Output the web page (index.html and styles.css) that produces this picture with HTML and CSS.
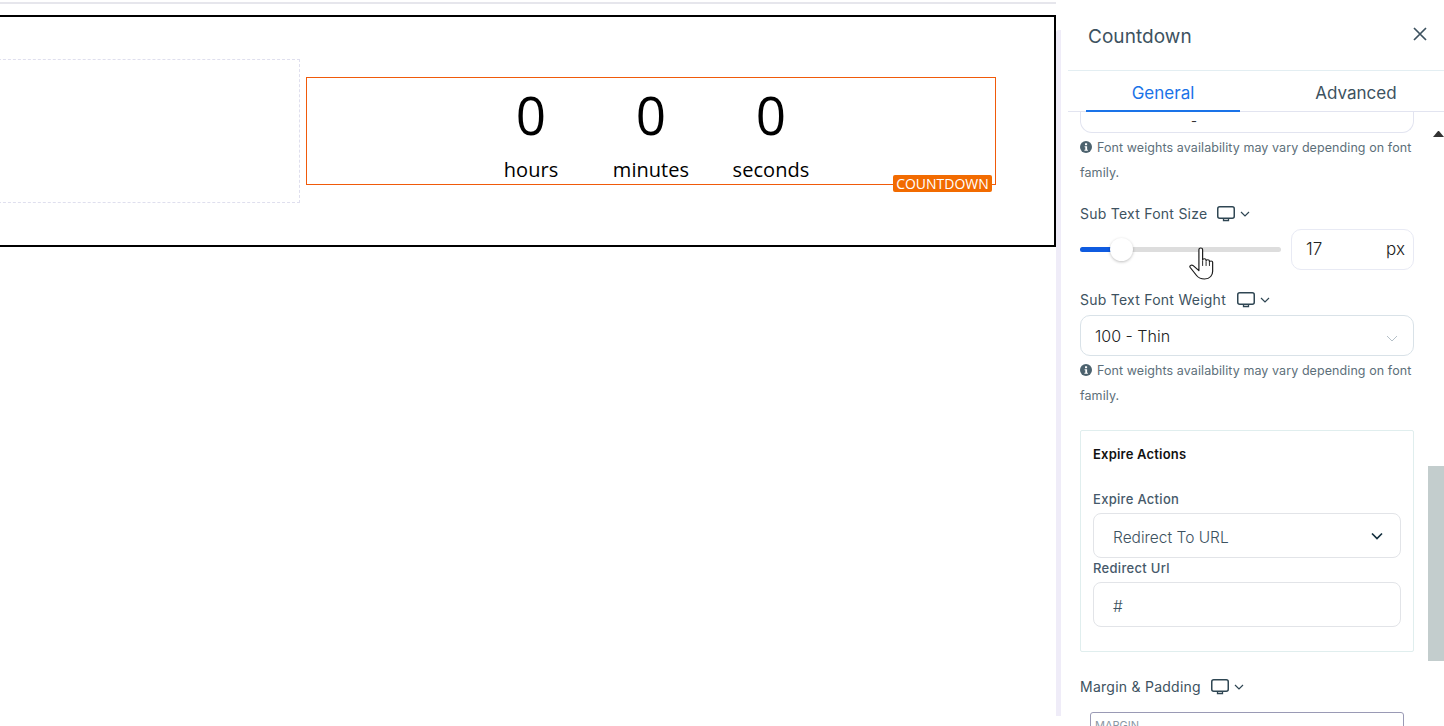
FILE: index.html
```html
<!DOCTYPE html>
<html lang="en">
<head>
<meta charset="utf-8">
<title>Countdown</title>
<link rel="stylesheet" href="styles.css">
</head>
<body>
<svg class="defs" width="0" height="0">
  <symbol id="monitor" viewBox="0 0 18 16">
    <rect x=".75" y=".75" width="16.500" height="11.500" rx="2" fill="none" stroke="currentColor" stroke-width="1.5"/>
    <path d="M6.5 12.5v2h5v-2" fill="none" stroke="currentColor" stroke-width="1.3"/>
  </symbol>
  <symbol id="chev" viewBox="0 0 10 6">
    <path d="M1 1l4 4 4-4" fill="none" stroke="currentColor" stroke-width="1.2"/>
  </symbol>
  <symbol id="info" viewBox="0 0 12 12">
    <circle cx="6" cy="6" r="6" fill="currentColor"/>
    <rect x="5" y="2.3" width="2.1" height="1.9" fill="#fff"/>
    <path d="M4.6 5.2h2.5v3.6h.8v1H4.4v-1h.9V6.2h-.7z" fill="#fff"/>
  </symbol>
</svg>

<div class="page">
  <main class="canvas">
    <div class="topline"></div>
    <div class="frame">
      <div class="empty-col"></div>
      <div class="countdown">
        <div class="unit"><div class="num">0</div><div class="sub">hours</div></div>
        <div class="unit"><div class="num">0</div><div class="sub">minutes</div></div>
        <div class="unit"><div class="num">0</div><div class="sub">seconds</div></div>
        <span class="badge">COUNTDOWN</span>
      </div>
    </div>
  </main>

  <div class="gutter"><div class="gutter-bar"></div></div>

  <aside class="panel">
    <div class="panel-head">
      <span class="panel-title">Countdown</span>
      <svg class="close" width="16" height="16" viewBox="0 0 16 16"><path d="M2 2l12 12M14 2L2 14" fill="none" stroke="currentColor" stroke-width="1.7"/></svg>
    </div>
    <div class="tabs">
      <div class="tab active">General</div>
      <div class="tab">Advanced</div>
    </div>
    <div class="panel-body">
      <div class="stub"><span>-</span></div>
      <p class="note"><svg class="ico-info"><use href="#info"/></svg>Font weights availability may vary depending on font family.</p>

      <div class="label label-size">Sub Text Font Size <svg class="ico-mon"><use href="#monitor"/></svg><svg class="ico-chev"><use href="#chev"/></svg></div>
      <div class="slider-row">
        <div class="track"><div class="fill"></div><div class="thumb"></div></div>
        <div class="num-input"><span>17</span><span>px</span></div>
      </div>

      <div class="label label-weight">Sub Text Font Weight <svg class="ico-mon"><use href="#monitor"/></svg><svg class="ico-chev"><use href="#chev"/></svg></div>
      <div class="select-box"><span>100 - Thin</span><svg class="sel-chev" width="12" height="7" viewBox="0 0 12 7"><path d="M1 1l5 5 5-5" fill="none" stroke="currentColor" stroke-width="1"/></svg></div>
      <p class="note"><svg class="ico-info"><use href="#info"/></svg>Font weights availability may vary depending on font family.</p>

      <section class="card">
        <h4 class="card-title">Expire Actions</h4>
        <div class="field-label first">Expire Action</div>
        <div class="field"><span>Redirect To URL</span><svg class="field-chev" width="12" height="8" viewBox="0 0 12 8"><path d="M1 1.5l5 5 5-5" fill="none" stroke="currentColor" stroke-width="1.7"/></svg></div>
        <div class="field-label">Redirect Url</div>
        <div class="field"><span>#</span></div>
      </section>

      <div class="label label-margin">Margin &amp; Padding <svg class="ico-mon"><use href="#monitor"/></svg><svg class="ico-chev"><use href="#chev"/></svg></div>
      <div class="margin-box">MARGIN</div>
    </div>
    <div class="scroll-arrow"></div>
    <div class="scroll-thumb"></div>
    <svg class="cursor" width="26" height="33" viewBox="0.5 0.5 21 30.5" preserveAspectRatio="none">
      <path d="M8.5 3c0-2 3-2 3 0v9.500c0-1.600 2.800-1.600 2.800 0v1c0-1.500 2.700-1.500 2.700 0v1c0-1.400 2.600-1.400 2.600.2v8.300c0 3.500-2 7-6.500 7-3.300 0-5-1-6.500-3.200L1.500 19.500c-1-1.700 1-3 2.400-1.700l4.600 4.500z" fill="#fff" stroke="#1a1a1a" stroke-width=".95" stroke-linejoin="round"/>
      <path d="M11.500 13v5M14.300 14v4M17 15v3" fill="none" stroke="#1a1a1a" stroke-width=".8"/>
    </svg>
  </aside>
</div>
</body>
</html>
```

FILE: styles.css
```css
* { box-sizing: border-box; }
html, body { margin: 0; height: 100%; overflow: hidden; background: #fff; }
.defs { position: absolute; }

.page { display: flex; height: 726px; font-family: Inter, "Liberation Sans", sans-serif; }

/* canvas */
.canvas { width: 1056px; flex: none; overflow: hidden; }
.topline { height: 2px; margin-top: 2px; background: #e6e6ec; }
.frame {
  display: flex;
  align-items: center;
  width: 1070px;
  height: 232px;
  margin: 11px 0 0 -14px;
  border: 2px solid #000;
  padding-right: 58px;
}
.empty-col {
  flex: none;
  width: 312px;
  height: 144px;
  border: 1px dashed #dfdfee;
}
.countdown {
  position: relative;
  display: flex;
  justify-content: center;
  flex: 1;
  height: 108px;
  margin: 0 0 0 6px;
  border: 1px solid #f05a0a;
  font-family: "Open Sans", sans-serif;
  color: #000;
  text-align: center;
}
.unit { width: 120px; }
.num { font-size: 53px; line-height: 72px; margin-top: 1px; }
.sub { font-size: 20px; line-height: 27px; margin-top: 5px; letter-spacing: .05px; }
.badge {
  position: absolute;
  right: 3px;
  bottom: -8px;
  width: 99px;
  height: 17px;
  border-radius: 2px;
  background: #f26b00;
  color: #fff;
  font-size: 14px;
  line-height: 17px;
}

/* gutter next to the panel */
.gutter { width: 12px; flex: none; padding-top: 30px; }
.gutter-bar { width: 5px; height: 686px; background: #efecf8; border-radius: 3px 0 0 0; }

/* side panel */
.panel { position: relative; flex: 1; min-width: 0; color: #3d5260; overflow: hidden; }
.panel-head {
  display: flex;
  justify-content: space-between;
  height: 71px;
  padding: 25px 16px 0 20px;
  border-bottom: 1px solid #e3eef2;
}
.panel-title { font-size: 19px; line-height: 24px; letter-spacing: .05px; }
.close { margin-top: 1px; color: #3d5260; }
.tabs { display: flex; height: 41px; padding-left: 18px; gap: 39px; border-bottom: 1px solid #e2e4f0; }
.tab { width: 154px; height: 41px; font-size: 17px; line-height: 45px; text-align: center; }
.tab.active { color: #1a73e8; border-bottom: 2px solid #1a73e8; }

.panel-body { height: 614px; padding: 0 30px 0 12px; overflow: hidden; }
.stub {
  height: 21px;
  padding-right: 106px;
  border: 1px solid #e2e4f0;
  border-top: 0;
  border-radius: 0 0 12px 12px;
  font-size: 13px;
  text-align: center;
  color: #333;
  line-height: 19px;
}
.note { margin: 2px 0 0; font-size: 12.5px; line-height: 25px; color: #5d6f7a; letter-spacing: .08px; }
.ico-info { width: 12px; height: 12px; color: #4c626e; margin-right: 5px; vertical-align: -1px; }
.label { display: flex; align-items: center; font-size: 14px; line-height: 20px; white-space: pre; letter-spacing: .25px; }
.label-size { margin-top: 19px; }
.label-size .ico-mon { margin-left: 5px; }
.label-weight { margin-top: 20px; }
.label-margin { margin-top: 25px; }
.label-margin .ico-mon { margin-left: 6px; }
.ico-mon { width: 18px; height: 16px; margin-left: 7px; color: #2f4653; }
.ico-chev { width: 10px; height: 6px; margin-left: 5px; color: #2f4653; }

.slider-row { display: flex; align-items: center; justify-content: space-between; height: 41px; margin-top: 5px; }
.track { position: relative; width: 201px; height: 5px; border-radius: 3px; background: #ddd; }
.fill { width: 41px; height: 5px; border-radius: 3px 0 0 3px; background: #0f5be0; }
.thumb {
  position: absolute;
  left: 30px;
  top: -9px;
  width: 23px;
  height: 23px;
  border-radius: 50%;
  background: #fff;
  box-shadow: 0 1px 3px rgba(0, 0, 0, .25);
}
.num-input {
  display: flex;
  justify-content: space-between;
  width: 123px;
  height: 41px;
  padding: 0 8px 0 14px;
  border: 1px solid #e8eaf4;
  border-radius: 10px;
  font-size: 17px;
  line-height: 39px;
  font-weight: 300;
  color: #222;
}

.select-box {
  display: flex;
  justify-content: space-between;
  align-items: center;
  height: 41px;
  margin-top: 5px;
  padding: 0 15px 0 14px;
  border: 1px solid #d9e2e8;
  border-radius: 10px;
  font-size: 16px;
  font-weight: 300;
  color: #222;
}
.sel-chev { color: #b5c0c8; margin-top: 5px; }

.card { height: 222px; margin-top: 22px; padding: 0 12px; border: 1px solid #e0eeee; border-radius: 2px; }
.card-title { margin: 0; padding-top: 15px; font-size: 13px; line-height: 16px; font-weight: 600; color: #111; letter-spacing: .2px; }
.field-label { font-size: 13px; line-height: 16px; font-weight: 500; color: #46596a; margin-top: 2px; letter-spacing: .3px; }
.field-label.first { margin-top: 29px; margin-bottom: 6px; }
.field + .field-label { margin-bottom: 6px; }
.field {
  display: flex;
  justify-content: space-between;
  align-items: center;
  height: 45px;
  padding: 3px 17px 0 19px;
  border: 1px solid #e2e4e8;
  border-radius: 8px;
  font-size: 15.500px;
  font-weight: 300;
  color: #3d5260;
}
.field-chev { color: #14303f; margin-top: -3px; }

.margin-box {
  width: 314px;
  height: 40px;
  margin: 15px 0 0 10px;
  padding: 5px 4px;
  border: 1px solid #9a9ab5;
  border-radius: 3px;
  font-size: 11px;
  color: #8a98a4;
}

/* scrollbar bits */
.scroll-arrow {
  position: absolute;
  right: 0;
  top: 131px;
  width: 11px;
  border-left: 5.500px solid transparent;
  border-right: 5.500px solid transparent;
  border-bottom: 6px solid #333;
}
.scroll-thumb { position: absolute; left: 360px; top: 466px; width: 16px; height: 195px; background: #c3cdcd; }
.cursor { position: absolute; left: 121px; top: 247px; }
```
